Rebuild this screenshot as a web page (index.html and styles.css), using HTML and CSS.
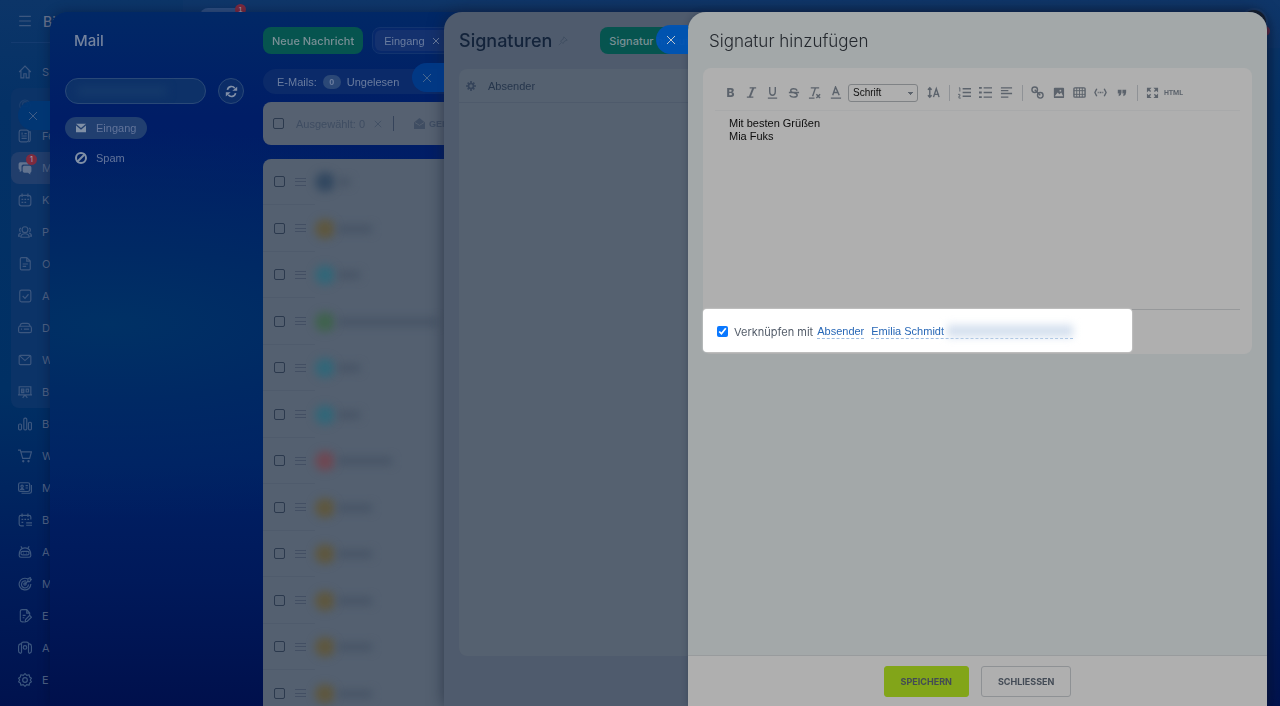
FILE: index.html
```
<!DOCTYPE html>
<html lang="de">
<head>
    <meta charset="UTF-8">
    <meta name="viewport" content="width=device-width, initial-scale=1.0">
    <title>Signatur hinzufügen</title>
    <link rel="stylesheet" href="styles.css">
</head>
<body>

<div class="app">
    <nav class="sidebar">
        <div class="brand">
            <svg class="icon" viewBox="0 0 24 24"><path d="M2 4h20M2 12h20M2 20h20"/></svg>
            <span>Bi</span>
        </div>
        <a class="nav-item" href="#"><svg class="icon" viewBox="0 0 24 24"><path d="M2 12L12 2l10 10M5 10v12h5v-7h4v7h5V10"/></svg>S</a>
        <div class="nav-group">
            <a class="nav-item faded" href="#" aria-label="Team"><svg class="icon" viewBox="0 0 24 24"><path d="M5 20a9 9 0 1 1 14 0M8 12a4 4 0 0 1 8 0v4H8z"/></svg></a>
            <a class="nav-item" href="#"><svg class="icon" viewBox="0 0 24 24"><rect x="2" y="2" width="16" height="20" rx="3"/><path d="M18 5h3v14q0 3-3 3M6 8h2M11 8h4M6 12h9M6 16h9M7 6v4"/></svg>Fe</a>
            <a class="nav-item active" href="#"><svg class="icon solid" viewBox="0 0 24 24"><path d="M4 2h11q3 0 3 3v1H9q-3 0-3 3v8l-3 2v-4q-2 0-2-3V5q0-3 3-3z"/><path d="M11 8h9q3 0 3 3v6q0 3-2 3v3l-4-3h-6q-3 0-3-3v-6q0-3 3-3z"/></svg>M<span class="badge">1</span></a>
            <a class="nav-item" href="#"><svg class="icon" viewBox="0 0 24 24"><rect x="2" y="4" width="20" height="18" rx="4"/><path d="M7 1v6M17 1v6M6 11h3M11 11h3M16 11h3M6 16h3M11 16h3"/></svg>K</a>
            <a class="nav-item" href="#"><svg class="icon" viewBox="0 0 24 24"><circle cx="12" cy="8" r="5"/><path d="M5 21q0-6 7-6t7 6zM5 5q-4 2-1 7M19 5q4 2 1 7M5 14q-4 1-4 5h3M19 14q4 1 4 5h-3"/></svg>P</a>
            <a class="nav-item" href="#"><svg class="icon" viewBox="0 0 24 24"><path d="M6 1h9l6 6v13q0 2-2 2H6q-2 0-2-2V3q0-2 2-2zM15 1v6h6M8 12h9M8 16h6"/></svg>O</a>
            <a class="nav-item" href="#"><svg class="icon" viewBox="0 0 24 24"><rect x="3" y="2" width="19" height="20" rx="3"/><path d="M8 12l4 4 6-7"/></svg>A</a>
            <a class="nav-item" href="#"><svg class="icon" viewBox="0 0 24 24"><rect x="1" y="9" width="22" height="11" rx="3"/><path d="M3 9l2-4q1-1 3-1h8q2 0 3 1l2 4M5 14h2M10 14h9"/></svg>D</a>
            <a class="nav-item" href="#"><svg class="icon" viewBox="0 0 24 24"><rect x="2" y="4" width="20" height="16" rx="2"/><path d="M3 5l9 8 9-8"/></svg>W</a>
            <a class="nav-item" href="#"><svg class="icon" viewBox="0 0 24 24"><path d="M2 3h20v14H2zM12 17l-4 5M12 17l4 5M6 7h4v6H6zM6 10h4M14 7h4v5h-4zM0 17h24"/></svg>B</a>
        </div>
        <a class="nav-item" href="#"><svg class="icon" viewBox="0 0 24 24"><rect x="1" y="12" width="5" height="10" rx="2"/><rect x="10" y="2" width="5" height="20" rx="2"/><rect x="18" y="9" width="5" height="13" rx="2"/></svg>B</a>
        <a class="nav-item" href="#"><svg class="icon" viewBox="0 0 24 24"><path d="M0 2h4l4 14h12l3-11H5"/><circle cx="9" cy="21" r="1"/><circle cx="18" cy="21" r="1"/></svg>W</a>
        <a class="nav-item" href="#"><svg class="icon" viewBox="0 0 24 24"><rect x="1" y="3" width="19" height="15" rx="3"/><path d="M23 7v11q0 3-3 3H6M4 15q3-5 6 0zM13 8h4M13 12h4"/><circle cx="7" cy="9" r="2"/></svg>M</a>
        <a class="nav-item" href="#"><svg class="icon" viewBox="0 0 24 24"><path d="M22 11V7q0-3-3-3H5Q2 4 2 7v12q0 3 3 3h5M7 1v6M17 1v6M6 11h3M11 11h3M16 11h3M6 16h3M14 17h10M14 21h10"/></svg>B</a>
        <a class="nav-item" href="#"><svg class="icon" viewBox="0 0 24 24"><path d="M5 2l2 4M19 2l-2 4M2 18q0-13 10-13t10 13q0 3-3 3H5q-3 0-3-3z"/><rect x="5" y="11" width="14" height="6" rx="3"/><path d="M9 14h1M14 14h1"/></svg>A</a>
        <a class="nav-item" href="#"><svg class="icon" viewBox="0 0 24 24"><path d="M16 3A10 10 0 1 0 22 12M14 7a6 6 0 1 0 4 6M12 12l6-6M17 3l4-2v3h2l-3 4h-3z"/><circle cx="12" cy="12" r="2"/></svg>M</a>
        <a class="nav-item" href="#"><svg class="icon" viewBox="0 0 24 24"><path d="M10 22H7q-3 0-3-3V4q0-3 3-3h8l5 6v3M15 1v6h5M8 11h5M8 15h3M13 18l7-7 3 3-7 7-4 1z"/></svg>E</a>
        <a class="nav-item" href="#"><svg class="icon" viewBox="0 0 24 24"><path d="M6 20V5q0-3 3-3h6q3 0 3 3v15M6 5H4Q1 6 1 9v8q0 3 3 4l2-1M18 5h2q3 1 3 4v8q0 3-3 4l-2-1"/><circle cx="12" cy="11" r="3"/></svg>A</a>
        <a class="nav-item" href="#"><svg class="icon" viewBox="0 0 24 24"><path stroke-linejoin="round" d="M12 1l3 3 4-1 1 4 3 2-2 3 2 3-3 2-1 4-4-1-3 3-3-3-4 1-1-4-3-2 2-3-2-3 3-2 1-4 4 1z"/><circle cx="12" cy="12" r="4"/></svg>E</a>
    </nav>
    <header class="topbar">
        <div class="topbar-tab"><span class="badge">1</span></div>
        <div class="avatar"><span class="avatar-dot"></span></div>
    </header>
</div>

<section class="panel panel-mail">
    <button class="panel-close close-mail" aria-label="Mail schließen"><svg viewBox="0 0 10 10"><path d="M1 1l8 8M9 1L1 9"/></svg></button>
    <aside class="mail-nav">
        <h1>Mail</h1>
        <div class="mailbox-row">
            <div class="mailbox-field"><input type="text" aria-label="Postfach"><span class="smudge"></span></div>
            <button class="refresh" aria-label="Aktualisieren"><svg viewBox="0 0 16 16"><path d="M3 6a5 5 0 0 1 9-2M13 10a5 5 0 0 1-9 2"/><path class="tip" d="M15 2v5h-6zM1 14V9h6z"/></svg></button>
        </div>
        <a class="folder selected" href="#"><svg viewBox="0 0 14 12"><path d="M1 1h12L7 6z"/><path d="M1 3v8h12V3L7 8z"/></svg>Eingang</a>
        <a class="folder" href="#"><svg class="ban" viewBox="0 0 14 14"><circle cx="7" cy="7" r="5"/><path d="M3 11l8-8"/></svg>Spam</a>
    </aside>
    <div class="mail-main">
        <div class="mail-actions">
            <button class="btn-green">Neue Nachricht</button>
            <div class="filter"><span class="chip">Eingang <svg viewBox="0 0 10 10"><path d="M2 2l6 6M8 2L2 8"/></svg></span></div>
        </div>
        <div class="counter">E-Mails: <span class="count">0</span> Ungelesen</div>
        <div class="bulk">
            <input class="check" type="checkbox" aria-label="Alle auswählen">
            <span>Ausgewählt: 0</span>
            <svg class="bulk-clear" viewBox="0 0 10 10"><path d="M1 1l8 8M9 1L1 9"/></svg>
            <span class="bulk-sep"></span>
            <button class="bulk-read"><svg viewBox="0 0 12 12"><path d="M0 5l6-5 6 5v7H0z"/><path class="fold" d="M1 5l5 3 5-3"/></svg>GEL</button>
        </div>
        <table class="mail-list">
            <tr><td class="pick"><input class="check" type="checkbox" aria-label="Auswählen"></td><td class="grip"><i></i></td><td class="sender"><b class="dot navy"></b><b class="name tiny"></b></td></tr>
            <tr><td class="pick"><input class="check" type="checkbox" aria-label="Auswählen"></td><td class="grip"><i></i></td><td class="sender"><b class="dot amber"></b><b class="name"></b></td></tr>
            <tr><td class="pick"><input class="check" type="checkbox" aria-label="Auswählen"></td><td class="grip"><i></i></td><td class="sender"><b class="dot teal"></b><b class="name short"></b></td></tr>
            <tr><td class="pick"><input class="check" type="checkbox" aria-label="Auswählen"></td><td class="grip"><i></i></td><td class="sender"><b class="dot green"></b><b class="name long"></b></td></tr>
            <tr><td class="pick"><input class="check" type="checkbox" aria-label="Auswählen"></td><td class="grip"><i></i></td><td class="sender"><b class="dot teal"></b><b class="name short"></b></td></tr>
            <tr><td class="pick"><input class="check" type="checkbox" aria-label="Auswählen"></td><td class="grip"><i></i></td><td class="sender"><b class="dot teal"></b><b class="name short"></b></td></tr>
            <tr><td class="pick"><input class="check" type="checkbox" aria-label="Auswählen"></td><td class="grip"><i></i></td><td class="sender"><b class="dot red"></b><b class="name wide"></b></td></tr>
            <tr><td class="pick"><input class="check" type="checkbox" aria-label="Auswählen"></td><td class="grip"><i></i></td><td class="sender"><b class="dot amber"></b><b class="name"></b></td></tr>
            <tr><td class="pick"><input class="check" type="checkbox" aria-label="Auswählen"></td><td class="grip"><i></i></td><td class="sender"><b class="dot amber"></b><b class="name"></b></td></tr>
            <tr><td class="pick"><input class="check" type="checkbox" aria-label="Auswählen"></td><td class="grip"><i></i></td><td class="sender"><b class="dot amber"></b><b class="name"></b></td></tr>
            <tr><td class="pick"><input class="check" type="checkbox" aria-label="Auswählen"></td><td class="grip"><i></i></td><td class="sender"><b class="dot amber"></b><b class="name"></b></td></tr>
            <tr><td class="pick"><input class="check" type="checkbox" aria-label="Auswählen"></td><td class="grip"><i></i></td><td class="sender"><b class="dot amber"></b><b class="name"></b></td></tr>
        </table>
    </div>
</section>

<section class="panel panel-signatures">
    <button class="panel-close close-signatures" aria-label="Signaturen schließen"><svg viewBox="0 0 10 10"><path d="M1 1l8 8M9 1L1 9"/></svg></button>
    <header class="signatures-head">
        <h2>Signaturen</h2>
        <svg class="pin" viewBox="0 0 12 12"><path d="M7 1l4 4-3 1-2 3-3-3 3-2zM4 8l-3 3"/></svg>
        <button class="btn-green">Signatur hinzufügen</button>
    </header>
    <div class="signatures-card">
        <div class="signatures-columns">
            <svg viewBox="0 0 12 12"><circle cx="6" cy="6" r="3"/><path d="M6 0v3M6 9v3M0 6h3M9 6h3M2 2l2 2M8 8l2 2M10 2L8 4M4 8l-2 2"/></svg>
            <span>Absender</span>
        </div>
    </div>
</section>

<section class="panel panel-editor">
    <button class="panel-close close-editor" aria-label="Schließen"><svg viewBox="0 0 10 10"><path d="M1 1l8 8M9 1L1 9"/></svg></button>
    <div class="editor-content">
        <h2>Signatur hinzufügen</h2>
        <div class="editor-card">
            <div class="toolbar">
                <button class="tool bold">B</button>
                <button class="tool" aria-label="Kursiv"><svg viewBox="0 0 14 14"><path d="M5 2h7M2 12h7"/><path class="thick" d="M9 2L5 12"/></svg></button>
                <button class="tool" aria-label="Unterstrichen"><svg viewBox="0 0 14 14"><path d="M4 1v5q0 4 3 4t3-4V1M2 13h10"/></svg></button>
                <button class="tool" aria-label="Durchgestrichen"><svg viewBox="0 0 14 14"><path d="M11 5Q10 3 7 3 4 3 4 5q0 2 3 2 4 1 4 3 0 2-4 2-3 0-4-2M2 7h11"/></svg></button>
                <button class="tool" aria-label="Format entfernen"><svg viewBox="0 0 14 14"><path d="M3 2h9M8 2L5 11M1 13h6M9 9l4 4M13 9l-4 4"/></svg></button>
                <button class="tool" aria-label="Textfarbe"><svg viewBox="0 0 14 14"><path d="M4 10l3-9 4 9M5 7h5M2 13h11"/></svg></button>
                <select class="font-select" aria-label="Schriftart"><option>Schrift</option></select>
                <button class="tool" aria-label="Schriftgröße"><svg viewBox="0 0 14 14"><path d="M3 2v10M1 4l2-2 2 2M1 10l2 2 2-2M7 12l3-9 3 9M8 9h5"/></svg></button>
                <span class="tool-sep"></span>
                <button class="tool" aria-label="Nummerierte Liste"><svg viewBox="0 0 14 14"><path d="M5 3h9M5 7h9M5 11h9"/><path class="thin" d="M1 2h1v4M0 9h2v2H1v2h2"/></svg></button>
                <button class="tool" aria-label="Liste"><svg viewBox="0 0 14 14"><path d="M5 2h9M5 7h9M5 12h9"/><path class="thick" d="M0 2h3M0 7h3M0 12h3"/></svg></button>
                <button class="tool" aria-label="Ausrichtung"><svg viewBox="0 0 14 14"><path d="M1 2h12M1 5h8M1 8h12M1 12h8"/></svg></button>
                <span class="tool-sep"></span>
                <button class="tool" aria-label="Link"><svg viewBox="0 0 14 14"><circle cx="4" cy="4" r="3"/><circle cx="10" cy="10" r="3"/><path d="M4 4l6 6"/></svg></button>
                <button class="tool" aria-label="Bild"><svg viewBox="0 0 14 14"><rect class="fill" x="2" y="2" width="11" height="11" rx="1"/><path class="cut" d="M3 11l3-4 2 2 2-2 2 4z"/><circle class="cut" cx="9" cy="5" r="1"/></svg></button>
                <button class="tool" aria-label="Tabelle"><svg viewBox="0 0 14 14"><rect x="1" y="2" width="12" height="10" rx="1"/><path class="thin" d="M1 5h12M1 9h12M4 2v10M7 2v10M10 2v10"/></svg></button>
                <button class="tool" aria-label="Code"><svg viewBox="0 0 14 14"><path d="M3 3L1 7l2 4M11 3l2 4-2 4M4 7h1M6 7h2M9 7h1"/></svg></button>
                <button class="tool" aria-label="Zitat"><svg viewBox="0 0 14 14"><path class="fill" d="M3 4h4v3q0 3-3 4V9l1-1H3zM8 4h4v3q0 3-3 4V9l1-1H8z"/></svg></button>
                <span class="tool-sep"></span>
                <button class="tool" aria-label="Vollbild"><svg viewBox="0 0 14 14"><path class="fill" d="M1 2h5L1 7zM8 2h5v5zM1 8l5 5H1zM13 8v5H8z"/><path d="M3 4l2 2M11 4L9 6M3 11l2-2M11 11L9 9"/></svg></button>
                <button class="tool html">HTML</button>
            </div>
            <div class="editor-body" contenteditable="true" spellcheck="false">Mit besten Grüßen<br>Mia Fuks</div>
            <div class="link-row">
                <div class="link-box">
                    <input class="link-check" type="checkbox" id="link" checked>
                    <label for="link">Verknüpfen mit</label>
                    <a href="#">Absender</a>
                    <a class="person" href="#">Emilia Schmidt<span class="mail-smudge"></span></a>
                </div>
                <div class="link-rest"></div>
            </div>
        </div>
    </div>
    <footer class="editor-footer">
        <button class="btn-save">SPEICHERN</button>
        <button class="btn-close">SCHLIESSEN</button>
    </footer>
</section>

</body>
</html>
```
FILE: styles.css
```
* {
    box-sizing: border-box;
}
body {
    margin: 0;
    height: 100vh;
    overflow: hidden;
    font-family: "Liberation Sans", Arial, sans-serif;
    font-size: 11px;
    background: linear-gradient(180deg, #0c3568 0%, #043166 15%, #003064 55%, #001e5c 78%, #00124e 100%);
}
button, input, select {
    font-family: inherit;
    font-size: 11px;
    margin: 0;
    padding: 0;
    border: none;
    background: none;
    color: inherit;
}
a {
    color: inherit;
    text-decoration: none;
}
h1, h2 {
    margin: 0;
    font-family: Inter, sans-serif;
}
svg {
    fill: none;
    stroke: currentColor;
    flex: none;
}

/* Portal behind the sliders */
.app {
    display: flex;
    height: 100vh;
    overflow: hidden;
}
.sidebar {
    width: 183px;
    padding-left: 11px;
    font-family: Inter, sans-serif;
    color: #4f6284;
}
.brand {
    display: flex;
    align-items: center;
    gap: 11px;
    height: 43px;
    padding-left: 7px;
    margin-bottom: 13px;
    border-bottom: 1px solid #143b70;
    font-size: 14px;
    font-weight: 500;
    color: #66718a;
}
.icon {
    width: 14px;
    height: 14px;
    stroke-width: 2;
    color: #3c577f;
}
.icon.solid {
    fill: #62738f;
    stroke: none;
}
.nav-item {
    position: relative;
    display: flex;
    align-items: center;
    gap: 10px;
    height: 32px;
    padding-left: 7px;
}
.nav-item.faded {
    opacity: 0.4;
}
.nav-item.active {
    background: #213e6c;
    border-radius: 8px;
}
.nav-group {
    background: #0b3367;
    border-radius: 8px;
}
.badge {
    position: absolute;
    left: 15px;
    top: 2px;
    width: 11px;
    height: 11px;
    border-radius: 6px;
    background: #7d2a3e;
    color: #a7a2b0;
    font-size: 8px;
    line-height: 11px;
    text-align: center;
}
.topbar {
    flex: 1;
    display: flex;
    justify-content: space-between;
    height: 48px;
    padding: 8px 12px 0 17px;
    background: rgba(30, 60, 110, 0.2);
}
.topbar-tab {
    position: relative;
    width: 46px;
    height: 24px;
    border-radius: 8px;
    background: #2f4f80;
}
.topbar-tab .badge {
    left: 35px;
    top: -4px;
}
.avatar {
    position: relative;
    width: 28px;
    height: 28px;
    border-radius: 50%;
    border: 2px solid #193d6d;
    background: #18222f;
}
.avatar-dot {
    position: absolute;
    right: -4px;
    top: 16px;
    width: 10px;
    height: 10px;
    border-radius: 50%;
    background: #742b45;
}

/* Sliders */
.panel {
    position: fixed;
    top: 12px;
    right: 13px;
    bottom: 0;
    border-radius: 18px 18px 0 0;
}
.panel-close {
    position: absolute;
    left: -32px;
    width: 32px;
    height: 29px;
    padding-left: 10px;
    border-radius: 15px 0 0 15px;
    text-align: left;
}
.panel-close svg {
    display: block;
    width: 10px;
    height: 10px;
}
.close-mail {
    top: 89px;
    background: rgba(0, 54, 116, 0.9);
    color: #3f5c86;
}
.close-signatures {
    top: 51px;
    background: rgba(0, 58, 135, 0.9);
    color: #45668f;
}
.close-editor {
    top: 13px;
    background: rgba(0, 83, 180, 0.96);
    color: #c0c6cd;
}
.btn-green {
    flex: none;
    height: 27px;
    padding: 0 9px;
    border-radius: 8px;
    background: #06544f;
    color: #7a9096;
    font-family: Inter, sans-serif;
    font-weight: 500;
}

/* Mail */
.panel-mail {
    left: 50px;
    display: flex;
    background: radial-gradient(ellipse at 5% 45%, #003165 0%, #002964 14%, rgba(0, 29, 102, 0) 36%), linear-gradient(180deg, #012866 0%, #001d66 15%, #002064 65%, #00195a 82%, #00104c 100%);
    box-shadow: 0 0 12px rgba(0, 10, 40, 0.4);
}
.mail-nav {
    width: 213px;
    padding: 20px 15px;
    color: #62749a;
}
.mail-nav h1 {
    padding-left: 9px;
    margin-bottom: 28px;
    font-size: 15px;
    font-weight: 500;
    line-height: 18px;
    color: #74839d;
}
.mailbox-row {
    display: flex;
    gap: 12px;
    margin-bottom: 13px;
}
.mailbox-field {
    position: relative;
    width: 141px;
}
.mailbox-field input {
    width: 100%;
    height: 26px;
    padding: 0 12px;
    border: 1px solid #2a4978;
    border-radius: 13px;
    background: #0d3168;
}
.smudge {
    position: absolute;
    left: 12px;
    top: 8px;
    width: 90px;
    height: 10px;
    background: #14396b;
    filter: blur(4px);
}
.refresh {
    display: flex;
    align-items: center;
    justify-content: center;
    width: 26px;
    height: 26px;
    border: 1px solid #2a4978;
    border-radius: 13px;
    background: #0c2d68;
    color: #8290a8;
}
.refresh svg {
    width: 13px;
    height: 13px;
    stroke-width: 2;
}
.refresh .tip {
    fill: currentColor;
    stroke: none;
}
.folder {
    display: flex;
    align-items: center;
    gap: 9px;
    width: 82px;
    height: 22px;
    padding-left: 10px;
    margin-bottom: 8px;
    border-radius: 11px;
}
.folder.selected {
    background: #213f70;
}
.folder svg {
    width: 12px;
    height: 10px;
    fill: #8090a6;
    stroke: none;
}
.folder .ban {
    width: 14px;
    height: 14px;
    margin: 0 -1px;
    fill: none;
    stroke: #8090a6;
    stroke-width: 2;
}
.mail-main {
    flex: 1;
    min-width: 0;
    height: 100%;
    overflow: hidden;
    padding-top: 15px;
    color: #6a7c9e;
}
.mail-actions {
    display: flex;
    gap: 9px;
    margin-bottom: 15px;
}
.filter {
    flex: 1;
    padding: 2px;
    border: 1px solid #12346f;
    border-radius: 8px;
    background: #07286b;
}
.chip {
    display: inline-flex;
    align-items: center;
    gap: 6px;
    height: 21px;
    padding: 0 9px;
    border-radius: 6px;
    background: #14316e;
}
.chip svg {
    width: 10px;
    height: 10px;
}
.counter {
    display: flex;
    align-items: center;
    gap: 6px;
    height: 25px;
    padding-left: 14px;
    margin-bottom: 8px;
    border-radius: 13px;
    background: #0b2a69;
}
.count {
    width: 18px;
    height: 14px;
    border-radius: 7px;
    background: #2b4877;
    font-size: 9px;
    font-weight: 700;
    line-height: 14px;
    text-align: center;
}
.bulk {
    display: flex;
    align-items: center;
    height: 43px;
    padding-left: 10px;
    margin-bottom: 14px;
    border-radius: 8px;
    background: #566171;
    color: #3f4d62;
}
.bulk .check {
    margin-right: 12px;
}
.bulk-clear {
    width: 8px;
    height: 8px;
    margin-left: 9px;
}
.bulk-sep {
    width: 1px;
    height: 15px;
    margin: 0 20px 0 11px;
    background: #35435a;
}
.bulk-read {
    display: flex;
    align-items: center;
    gap: 4px;
    font-size: 9px;
    font-weight: 700;
}
.bulk-read svg {
    width: 11px;
    height: 11px;
    fill: currentColor;
    stroke: none;
}
.bulk-read .fold {
    fill: none;
    stroke: #566171;
}
.check {
    appearance: none;
    width: 11px;
    height: 11px;
    border: 1px solid #2b394d;
    border-radius: 2px;
    flex: none;
    display: block;
}
.mail-list {
    width: 100%;
    border-collapse: separate;
    border-spacing: 0;
    border-radius: 8px 8px 0 0;
    background: #546070;
}
.mail-list tr {
    height: 46px;
}
.mail-list tr:nth-child(even) {
    height: 47px;
}
.mail-list td {
    padding: 0;
    vertical-align: middle;
}
.pick, .grip {
    border-bottom: 1px solid #4f5b6c;
}
.mail-list .pick {
    width: 32px;
    padding-left: 11px;
}
.grip {
    width: 20px;
}
.grip i {
    display: block;
    width: 11px;
    height: 8px;
    border: solid #434f63;
    border-width: 1px 0;
    background: linear-gradient(#434f63, #434f63) center / 11px 1px no-repeat;
}
.sender b {
    display: inline-block;
    vertical-align: middle;
    filter: blur(4px);
}
.sender .dot {
    width: 20px;
    height: 20px;
    border-radius: 50%;
    margin-right: 3px;
}
.dot.navy { background: #334860; }
.dot.amber { background: #5e573f; }
.dot.teal { background: #336678; }
.dot.green { background: #40624e; }
.dot.red { background: #6e4853; }
.name {
    width: 34px;
    height: 8px;
    background: #475466;
}
.name.tiny { width: 12px; }
.name.short { width: 22px; }
.name.wide { width: 54px; }
.name.long { width: 100px; }

/* Signature list */
.panel-signatures {
    left: 444px;
    padding: 15px 15px 50px;
    display: flex;
    flex-direction: column;
    background: #4f5b6d;
    box-shadow: 0 0 16px rgba(20, 30, 50, 0.6);
}
.signatures-head {
    display: flex;
    align-items: center;
    margin-bottom: 15px;
}
.signatures-head h2 {
    font-size: 18px;
    font-weight: 500;
    line-height: 26px;
    color: #13233a;
}
.pin {
    width: 10px;
    height: 10px;
    margin: 0 32px 0 6px;
    color: #3f4d60;
}
.signatures-card {
    flex: 1;
    border-radius: 8px;
    background: #556170;
}
.signatures-columns {
    display: flex;
    align-items: center;
    gap: 12px;
    height: 34px;
    padding-left: 7px;
    border-bottom: 1px solid #4e5a6b;
    color: #26364c;
}
.signatures-columns svg {
    width: 10px;
    height: 10px;
    stroke-width: 2;
    color: #35445a;
}

/* Signature editor */
.panel-editor {
    left: 688px;
    display: flex;
    flex-direction: column;
    background: #a3a8a9;
    box-shadow: 0 0 6px rgba(20, 30, 50, 0.3);
}
.editor-content {
    flex: 1;
    padding: 16px 15px;
}
.editor-content h2 {
    padding-left: 6px;
    margin-bottom: 14px;
    font-size: 17px;
    font-weight: 300;
    line-height: 26px;
    color: #24282e;
}
.editor-card {
    border-radius: 8px;
    background: #afafaf;
}
.toolbar {
    display: flex;
    align-items: center;
    height: 43px;
    padding: 7px 5px 0;
    margin: 0 12px;
    border-bottom: 1px solid #a8a9aa;
    color: #5c636c;
}
.tool {
    display: flex;
    align-items: center;
    justify-content: center;
    width: 21px;
    height: 21px;
    flex: none;
}
.tool svg {
    width: 13px;
    height: 13px;
    stroke-width: 1.5;
}
.tool .thick {
    stroke-width: 2;
}
.tool .thin {
    stroke-width: 1;
}
.tool .fill {
    fill: currentColor;
    stroke: none;
}
.tool .cut {
    fill: #afafaf;
    stroke: none;
}
.tool.bold {
    font-family: Inter, sans-serif;
    font-size: 12px;
    font-weight: 800;
}
.tool.html {
    font-family: Roboto, sans-serif;
    font-size: 7px;
    font-weight: 700;
}
.font-select {
    appearance: none;
    width: 70px;
    height: 18px;
    margin: 0 5px 0 2px;
    padding-left: 4px;
    border: 1px solid #7f8285;
    border-radius: 3px;
    font-size: 10px;
    color: #101010;
    background: linear-gradient(#5c636c, #5c636c) right 4px top 7px / 5px 1px no-repeat, linear-gradient(#5c636c, #5c636c) right 5px top 8px / 3px 1px no-repeat, linear-gradient(#5c636c, #5c636c) right 6px top 9px / 1px 1px no-repeat;
}
.tool-sep {
    width: 1px;
    height: 16px;
    margin: 0 4px 0 5px;
    background: #8f9296;
}
.editor-body {
    min-height: 198px;
    padding: 6px 26px;
    line-height: 13px;
    color: #0c0c0c;
    outline: none;
}
.link-row {
    display: flex;
    height: 45px;
    align-items: flex-start;
}
.link-box {
    display: flex;
    align-items: center;
    width: 429px;
    height: 43px;
    padding: 2px 14px 0;
    border-radius: 4px;
    background: #fff;
    color: #535c69;
    box-shadow: 0 0 2px rgba(255, 255, 255, 0.7);
}
.link-check {
    width: 11px;
    height: 11px;
    margin-right: 6px;
    accent-color: #0a78ff;
}
.link-box label {
    font-family: Inter, sans-serif;
}
.link-box a {
    margin-left: 4px;
    padding-top: 1px;
    border-bottom: 1px dashed #9dbce0;
    line-height: 13px;
    color: #2767b6;
}
.link-box .person {
    display: flex;
    margin-left: 7px;
}
.mail-smudge {
    width: 126px;
    height: 12px;
    margin-left: 3px;
    background: #d3dfee;
    filter: blur(4px);
}
.link-rest {
    flex: 1;
    margin-right: 12px;
    border-top: 1px solid #96989a;
}
.editor-footer {
    display: flex;
    align-items: center;
    justify-content: center;
    gap: 12px;
    height: 51px;
    border-top: 1px solid #989b9d;
    background: #afafaf;
}
.btn-save, .btn-close {
    height: 31px;
    padding: 0 16px;
    border: 1px solid #8e9194;
    border-radius: 3px;
    font-family: Inter, sans-serif;
    font-size: 9px;
    font-weight: 700;
    color: #434b55;
}
.btn-save {
    border-color: #82a519;
    background: #82a519;
}
```
